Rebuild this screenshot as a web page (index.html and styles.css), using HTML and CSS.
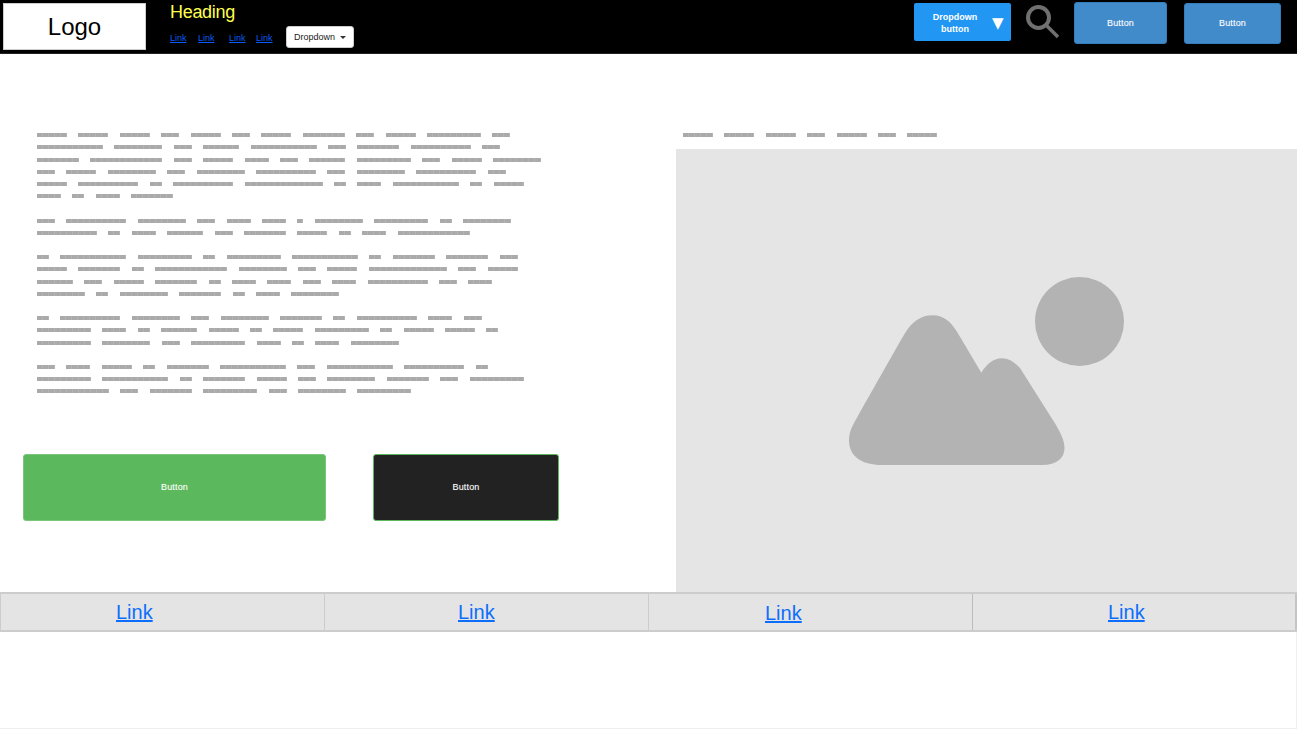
FILE: index.html
```html
<!DOCTYPE html>
<html lang="en">
<head>
    <meta charset="UTF-8">
    <title>Wireframe</title>
    <link rel="stylesheet" href="styles.css">
</head>

<body>
<div id="page">
    <div id="header">
        <div class="logo">Logo</div>
        <div class="title">
            <h1>Heading</h1>
            <div class="nav">
                <ul class="nav-links">
                    <li class="l1"><a href="#">Link</a></li>
                    <li class="l2"><a href="#">Link</a></li>
                    <li class="l3"><a href="#">Link</a></li>
                    <li class="l4"><a href="#">Link</a></li>
                </ul>
                <button class="btn-drop">Dropdown<span class="caret"></span></button>
            </div>
        </div>
        <div class="tools">
            <button class="btn-blue"><span>Dropdown button</span><span class="arrow">&#9660;</span></button>
            <svg class="search" width="34" height="34" viewBox="0 0 34 34">
                <circle cx="13.500" cy="12.500" r="10.500" fill="none" stroke="#707070" stroke-width="4"/>
                <path d="M21.500 20.500L33 32" fill="none" stroke="#707070" stroke-width="3.600"/>
            </svg>
            <button class="btn-head b1">Button</button>
            <button class="btn-head b2">Button</button>
        </div>
    </div>

    <div id="main">
        <div class="left">
            <div class="para">
                <div class="line"><i class="w5"></i><i class="w5"></i><i class="w5"></i><i class="w3"></i><i class="w5"></i><i class="w3"></i><i class="w5"></i><i class="w7"></i><i class="w3"></i><i class="w5"></i><i class="w9"></i><i class="w3"></i></div>
                <div class="line"><i class="w11"></i><i class="w8"></i><i class="w3"></i><i class="w6"></i><i class="w11"></i><i class="w3"></i><i class="w7"></i><i class="w10"></i><i class="w3"></i></div>
                <div class="line"><i class="w7"></i><i class="w12"></i><i class="w3"></i><i class="w5"></i><i class="w4"></i><i class="w3"></i><i class="w6"></i><i class="w9"></i><i class="w3"></i><i class="w5"></i><i class="w8"></i></div>
                <div class="line"><i class="w3"></i><i class="w5"></i><i class="w8"></i><i class="w3"></i><i class="w8"></i><i class="w10"></i><i class="w3"></i><i class="w8"></i><i class="w10"></i><i class="w3"></i></div>
                <div class="line"><i class="w5"></i><i class="w10"></i><i class="w2"></i><i class="w10"></i><i class="w13"></i><i class="w2"></i><i class="w4"></i><i class="w11"></i><i class="w2"></i><i class="w5"></i></div>
                <div class="line"><i class="w4"></i><i class="w2"></i><i class="w4"></i><i class="w7"></i></div>
            </div>
            <div class="para">
                <div class="line"><i class="w3"></i><i class="w10"></i><i class="w8"></i><i class="w3"></i><i class="w4"></i><i class="w4"></i><i class="w1"></i><i class="w8"></i><i class="w9"></i><i class="w2"></i><i class="w8"></i></div>
                <div class="line"><i class="w10"></i><i class="w2"></i><i class="w4"></i><i class="w6"></i><i class="w3"></i><i class="w7"></i><i class="w5"></i><i class="w2"></i><i class="w4"></i><i class="w12"></i></div>
            </div>
            <div class="para">
                <div class="line"><i class="w2"></i><i class="w11"></i><i class="w9"></i><i class="w2"></i><i class="w9"></i><i class="w11"></i><i class="w2"></i><i class="w7"></i><i class="w7"></i><i class="w3"></i></div>
                <div class="line"><i class="w5"></i><i class="w7"></i><i class="w2"></i><i class="w12"></i><i class="w8"></i><i class="w3"></i><i class="w5"></i><i class="w13"></i><i class="w3"></i><i class="w5"></i></div>
                <div class="line"><i class="w6"></i><i class="w3"></i><i class="w5"></i><i class="w7"></i><i class="w2"></i><i class="w4"></i><i class="w4"></i><i class="w3"></i><i class="w4"></i><i class="w10"></i><i class="w3"></i><i class="w4"></i></div>
                <div class="line"><i class="w8"></i><i class="w2"></i><i class="w8"></i><i class="w7"></i><i class="w2"></i><i class="w4"></i><i class="w8"></i></div>
            </div>
            <div class="para">
                <div class="line"><i class="w2"></i><i class="w10"></i><i class="w8"></i><i class="w3"></i><i class="w8"></i><i class="w7"></i><i class="w2"></i><i class="w10"></i><i class="w4"></i><i class="w3"></i></div>
                <div class="line"><i class="w9"></i><i class="w4"></i><i class="w2"></i><i class="w6"></i><i class="w5"></i><i class="w2"></i><i class="w5"></i><i class="w9"></i><i class="w2"></i><i class="w5"></i><i class="w5"></i><i class="w2"></i></div>
                <div class="line"><i class="w9"></i><i class="w8"></i><i class="w3"></i><i class="w9"></i><i class="w4"></i><i class="w2"></i><i class="w4"></i><i class="w8"></i></div>
            </div>
            <div class="para">
                <div class="line"><i class="w3"></i><i class="w4"></i><i class="w5"></i><i class="w2"></i><i class="w7"></i><i class="w11"></i><i class="w3"></i><i class="w11"></i><i class="w10"></i><i class="w2"></i></div>
                <div class="line"><i class="w9"></i><i class="w11"></i><i class="w2"></i><i class="w7"></i><i class="w5"></i><i class="w3"></i><i class="w8"></i><i class="w7"></i><i class="w3"></i><i class="w9"></i></div>
                <div class="line"><i class="w12"></i><i class="w3"></i><i class="w7"></i><i class="w9"></i><i class="w3"></i><i class="w8"></i><i class="w9"></i></div>
            </div>
            <div class="actions">
                <button class="btn-green">Button</button>
                <button class="btn-dark">Button</button>
            </div>
        </div>
        <div class="right">
            <div class="line caption"><i class="w5"></i><i class="w5"></i><i class="w5"></i><i class="w3"></i><i class="w5"></i><i class="w3"></i><i class="w5"></i></div>
            <div class="image">
                <svg width="275" height="189" viewBox="0 0 275 189">
                    <path fill="#b3b3b3" d="M0 164C0 180 12 189 33 189L193 189C208 189 215.500 182 215.500 172C215.500 164 211 156 207 149L171 92C165 86 160 82.300 152.700 82.300C144 82.300 137 89 132.300 96.700L111 60.700C103 47 96 39.300 83.700 39.300C73 39.300 66 44 59.300 52.300C55 58 50 68 7.700 142.300C3 150 0 157 0 164Z"/>
                    <circle cx="230.500" cy="45.500" r="44.500" fill="#b3b3b3"/>
                </svg>
            </div>
        </div>
    </div>

    <ul id="tabs">
        <li class="t1"><a href="#">Link</a></li>
        <li class="t2"><a href="#">Link</a></li>
        <li class="t3"><a href="#">Link</a></li>
        <li class="t4"><a href="#">Link</a></li>
    </ul>
    <div id="rest"></div>
</div>
</body>
</html>
```

FILE: styles.css
```css
*{
    margin:0;
    padding:0;
    box-sizing:border-box;
}
ul,ol{
    list-style: none;
}
body{
    background:#fff;
    font-family:"Liberation Sans",Arial,sans-serif;
}
button{
    font-family:"Liberation Sans",Arial,sans-serif;
    cursor:pointer;
}

#page{
    height:729px;
    overflow:hidden;
}

/* header */
#header{
    height:54px;
    background:#000;
    border-bottom:1px solid #222;
    display:flex;
    padding-left:3px;
}
.logo{
    width:143px;
    height:47px;
    margin-top:3px;
    background:#fff;
    border:1px solid #ccc;
    color:#000;
    font-size:24px;
    line-height:45px;
    text-align:center;
}
.title{
    margin-left:24px;
    padding-top:2px;
}
.title h1{
    color:#ffff4d;
    font-size:18px;
    font-weight:normal;
    line-height:20px;
    letter-spacing:-0.3px;
}
.nav{
    display:flex;
    margin-top:4px;
}
.nav-links{
    display:flex;
    width:116px;
    padding-top:7px;
}
.nav-links a{
    color:#0a5cf5;
    font-size:9px;
    line-height:11px;
    display:block;
}
.l2{
    margin-left:11.500px;
}
.l3{
    margin-left:14.500px;
}
.l4{
    margin-left:10.500px;
}
.btn-drop{
    width:68px;
    height:22px;
    background:#fff;
    border:1px solid #ccc;
    border-radius:3px;
    color:#222;
    font-size:9px;
}
.caret{
    display:inline-block;
    margin-left:5px;
    vertical-align:middle;
    border-top:3px solid #333;
    border-left:3px solid transparent;
    border-right:3px solid transparent;
}
.tools{
    margin-left:auto;
    display:flex;
    padding-right:16px;
}
.btn-blue{
    width:97px;
    height:38px;
    margin-top:3px;
    background:#2196f3;
    border:none;
    border-radius:2px;
    color:#fff;
    font-size:9px;
    font-weight:bold;
    line-height:12px;
    display:flex;
    align-items:center;
    padding:1px 0 0 12px;
}
.btn-blue span:first-child{
    width:58px;
}
.arrow{
    font-size:15px;
    margin-left:8px;
    font-weight:normal;
    font-family:"DejaVu Sans",sans-serif;
}
.search{
    margin:5px 0 0 14px;
}
.btn-head{
    background:#428bca;
    border:1px solid #357ebd;
    border-radius:3px;
    color:#fff;
    font-size:9px;
    letter-spacing:.15px;
    text-shadow:0 0 1px rgba(255,255,255,.3);
}
.b1{
    width:93px;
    height:42px;
    margin:2px 0 0 15px;
}
.b2{
    width:97px;
    height:41px;
    margin:3px 0 0 17px;
    padding-bottom:2px;
}

/* main */
#main{
    display:flex;
    height:538px;
}
.left{
    width:676px;
    padding:75px 0 0 37px;
}
.para{
    margin-bottom:12px;
}
.line{
    display:flex;
    align-items:center;
    gap:11.400px;
    height:12.250px;
}
.line i{
    display:block;
    height:4px;
    background:repeating-linear-gradient(90deg,#aaa 0,#aaa 5px,#b4b4b4 5px,#b4b4b4 6px);
}
.w1{width:6px;}
.w2{width:12px;}
.w3{width:18px;}
.w4{width:24px;}
.w5{width:30px;}
.w6{width:36px;}
.w7{width:42px;}
.w8{width:48px;}
.w9{width:54px;}
.w10{width:60px;}
.w11{width:66px;}
.w12{width:72px;}
.w13{width:78px;}
.actions{
    display:flex;
    margin:56px 0 0 -14px;
}
.actions button{
    height:67px;
    border-radius:3px;
    color:#fff;
    font-size:9px;
    letter-spacing:.15px;
    text-shadow:0 0 1px rgba(255,255,255,.3);
}
.btn-green{
    width:303px;
    background:#5cb85c;
    border:1px solid #7cc67c;
}
.btn-dark{
    width:186px;
    margin-left:47px;
    background:#222;
    border:1px solid #5cb85c;
}
.right{
    flex:1;
    display:flex;
    flex-direction:column;
    padding-top:75px;
}
.caption{
    margin:0 0 7.750px 7px;
}
.image{
    flex:1;
    background:#e5e5e5;
    display:flex;
    align-items:center;
    justify-content:center;
}

/* bottom links */
#tabs{
    display:flex;
    height:40px;
    background:#e4e4e4;
    border-top:2px solid #ccc;
    border-bottom:2px solid #ccc;
}
#tabs li{
    width:324px;
    border-left:1px solid #ccc;
    font-size:20px;
    line-height:37px;
}
#tabs li:last-child{
    flex:1;
    border-left:1px solid #bbb;
    border-right:2px solid #c4c4c4;
}
#tabs a{
    color:#0d6efd;
}
.t1{
    padding-left:115px;
}
.t2{
    padding-left:133px;
}
.t3{
    padding-left:116px;
    padding-top:1px;
}
.t4{
    padding-left:135px;
}

#rest{
    height:97px;
    border-right:1px solid #eee;
    border-bottom:1px solid #eee;
}
```
